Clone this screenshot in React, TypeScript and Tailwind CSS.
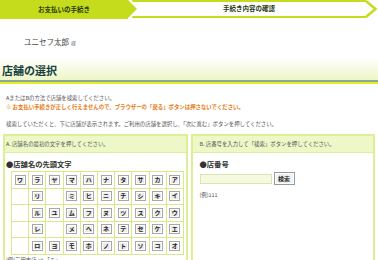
import React from 'react';

const KANA: string[][] = [
  ['ワ', 'ラ', 'ヤ', 'マ', 'ハ', 'ナ', 'タ', 'サ', 'カ', 'ア'],
  ['', 'リ', '', 'ミ', 'ヒ', 'ニ', 'チ', 'シ', 'キ', 'イ'],
  ['', 'ル', 'ユ', 'ム', 'フ', 'ヌ', 'ツ', 'ス', 'ク', 'ウ'],
  ['', 'レ', '', 'メ', 'ヘ', 'ネ', 'テ', 'セ', 'ケ', 'エ'],
  ['', 'ロ', 'ヨ', 'モ', 'ホ', 'ノ', 'ト', 'ソ', 'コ', 'オ'],
];

// --- StepBar ---

function StepBar() {
  return (
    <div className="flex h-[19px] w-full">
      <div className="flex w-[128px] items-center justify-center bg-[#c4dc1c] text-[6.5px] font-bold text-[#2b3a10]">
        お支払いの手続き
      </div>
      <svg width="12" height="19" viewBox="0 0 12 19" className="shrink-0">
        <polygon points="0,0 0,18 9,9" fill="#c4dc1c" />
        <rect x="4" y="0" width="8" height="2" fill="#c4dc1c" />
        <rect x="4" y="16" width="8" height="2" fill="#c4dc1c" />
        <polygon points="1,0 3,0 12,9 3,18 1,18 10,9" fill="#ffffff" />
      </svg>
      <div className="flex h-[18px] flex-1 items-center justify-center border-y-2 border-[#c4dc1c] pr-[8px] text-[6.5px] font-bold text-[#2b3a10]">
        手続き内容の確認
      </div>
      <svg width="12" height="19" viewBox="0 0 12 19" className="shrink-0">
        <polyline points="0,1 9.5,9 0,17" fill="none" stroke="#c4dc1c" strokeWidth="2.5" />
      </svg>
    </div>
  );
}

// --- KanaButton ---

function KanaButton({ label }: { label: string }) {
  return (
    <span className="mx-auto flex h-[10px] w-[11px] items-center justify-center border border-[#a8a8a8] bg-[#ececec] text-[6px] font-bold leading-none text-[#222] shadow-[inset_0_0_0_1px_#ffffff]">
      {label}
    </span>
  );
}

export default function App() {
  return (
    <div
      className="h-[260px] w-[378px] overflow-hidden bg-white text-[#555]"
      style={{ fontFamily: '"Noto Sans CJK JP", "Noto Sans", sans-serif' }}
    >
      <StepBar />

      <div className="flex h-[39px] items-start pl-[24px] pt-[18px]">
        <span className="text-[7.5px] leading-[10px] text-[#444]">ユニセフ太郎</span>
        <span className="ml-[2px] mt-[2px] text-[5px] leading-[8px] text-[#666]">様</span>
      </div>

      <div className="border-b-2 border-[#e4ef1e]">
        <div className="flex h-[24px] items-center border-b-2 border-[#8ea5a0] bg-gradient-to-b from-white to-[#eef6c6] pl-[2px] pt-[2px]">
          <h1 className="text-[11px] font-bold leading-none text-[#17413e]">店舗の選択</h1>
        </div>
      </div>

      <div className="mt-[9.5px] pl-[6px] text-[5.4px] leading-[9px]">
        <p className="text-[#555]">AまたはBの方法で店舗を検索してください。</p>
        <p className="font-semibold text-[#e8780f]">
          ※ お支払い手続きが正しく行えませんので、ブラウザーの「戻る」ボタンは押さないでください。
        </p>
        <p className="mt-[8px] text-[#555]">
          検索していただくと、下に店舗が表示されます。ご利用の店舗を選択し、「次に進む」ボタンを押してください。
        </p>
      </div>

      <div className="mt-[5.5px] flex gap-[3px] px-[3px]">
        {/* A panel */}
        <div className="h-[140px] flex-1 border-2 border-[#dcee96]">
          <div className="flex h-[17px] items-center border-b border-[#dcee96] bg-[#eef7c8] pl-[1px] text-[5.4px] text-[#555]">
            A. 店舗名の最初の文字を押してください。
          </div>
          <div className="pl-[1px] pt-[6px]">
            <p className="text-[7.3px] font-bold leading-[10px] text-[#333]">●店舗名の先頭文字</p>
            <table className="ml-[5px] mt-[2px] w-[173px] table-fixed border-collapse text-[0px] leading-[0]">
              <tbody>
                {KANA.map((row, i) => (
                  <tr key={i}>
                    {row.map((k, j) => (
                      <td key={j} className="h-[16.5px] border border-[#d6ea88] p-0 text-center align-middle">
                        {k && <KanaButton label={k} />}
                      </td>
                    ))}
                  </tr>
                ))}
              </tbody>
            </table>
            <p className="mt-[1px] text-[5.4px] leading-[8px] text-[#555]">(例)三田支店 → 「ミ」</p>
          </div>
        </div>

        {/* B panel */}
        <div className="h-[140px] flex-1 border-2 border-[#dcee96]">
          <div className="flex h-[17px] items-center border-b border-[#dcee96] bg-[#eef7c8] pl-[7px] text-[5.4px] text-[#555]">
            B. 店番号を入力して「検索」ボタンを押してください。
          </div>
          <div className="pl-[7px] pt-[6px]">
            <p className="text-[7.3px] font-bold leading-[10px] text-[#333]">●店番号</p>
            <div className="mt-[3px] flex items-center gap-[2px]">
              <input
                type="text"
                className="h-[10px] w-[72px] border border-[#d8e6b4] bg-[#f5fadf] outline-none"
              />
              <button
                type="button"
                className="flex h-[13px] w-[21px] items-center justify-center border border-[#9a9a9a] bg-[#f2f2f2] text-[6px] font-bold leading-none text-[#222] shadow-[inset_0_0_0_1px_#ffffff]"
              >
                検索
              </button>
            </div>
            <p className="mt-[6px] text-[5.4px] leading-[8px] text-[#555]">(例)111</p>
          </div>
        </div>
      </div>
    </div>
  );
}
